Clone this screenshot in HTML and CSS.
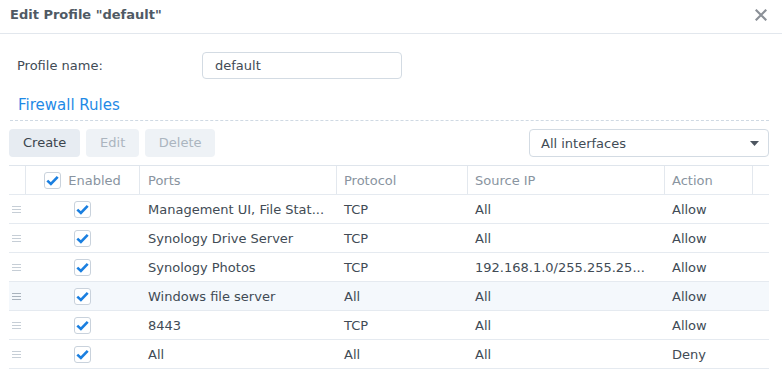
FILE: index.html
```html
<!DOCTYPE html>
<html>
<head>
<meta charset="utf-8">
<link rel="stylesheet" href="styles.css">
</head>
<body>
<div class="dialog">
  <div class="header">
    <div class="title">Edit Profile "default"</div>
    <svg class="close" width="12" height="12" viewBox="0 0 12 12"><path d="M1.5 1.5L10.5 10.5M10.5 1.5L1.5 10.5" stroke="#8b9097" stroke-width="2.2" stroke-linecap="square"/></svg>
  </div>
  <div class="content">
    <div class="form-row">
      <label class="label">Profile name:</label>
      <div class="input">default</div>
    </div>
    <div class="section">Firewall Rules</div>
    <div class="toolbar">
      <div class="btn">Create</div>
      <div class="btn disabled">Edit</div>
      <div class="btn disabled">Delete</div>
      <div class="spacer"></div>
      <div class="select"><span>All interfaces</span><svg width="9" height="5" viewBox="0 0 9 5"><path d="M0 0H9L4.5 5Z" fill="#4d5660"/></svg></div>
    </div>
    <div class="table">
      <div class="row head">
        <div class="c c-drag"></div>
        <div class="c c-en"><span class="cb"><svg width="13" height="11" viewBox="0 0 13 11"><path d="M1.3 5.6L4.9 9L11.7 1.8" fill="none" stroke="#1a7fe0" stroke-width="2.6"/></svg></span><span>Enabled</span></div>
        <div class="c c-ports">Ports</div>
        <div class="c c-proto">Protocol</div>
        <div class="c c-src">Source IP</div>
        <div class="c c-act">Action</div>
        <div class="c c-end"></div>
      </div>
      <div class="row">
        <div class="c c-drag"><span class="grip"></span></div>
        <div class="c c-en"><span class="cb"><svg width="13" height="11" viewBox="0 0 13 11"><path d="M1.3 5.6L4.9 9L11.7 1.8" fill="none" stroke="#1a7fe0" stroke-width="2.6"/></svg></span></div>
        <div class="c c-ports">Management UI, File Stat...</div>
        <div class="c c-proto">TCP</div>
        <div class="c c-src">All</div>
        <div class="c c-act">Allow</div>
        <div class="c c-end"></div>
      </div>
      <div class="row">
        <div class="c c-drag"><span class="grip"></span></div>
        <div class="c c-en"><span class="cb"><svg width="13" height="11" viewBox="0 0 13 11"><path d="M1.3 5.6L4.9 9L11.7 1.8" fill="none" stroke="#1a7fe0" stroke-width="2.6"/></svg></span></div>
        <div class="c c-ports">Synology Drive Server</div>
        <div class="c c-proto">TCP</div>
        <div class="c c-src">All</div>
        <div class="c c-act">Allow</div>
        <div class="c c-end"></div>
      </div>
      <div class="row">
        <div class="c c-drag"><span class="grip"></span></div>
        <div class="c c-en"><span class="cb"><svg width="13" height="11" viewBox="0 0 13 11"><path d="M1.3 5.6L4.9 9L11.7 1.8" fill="none" stroke="#1a7fe0" stroke-width="2.6"/></svg></span></div>
        <div class="c c-ports">Synology Photos</div>
        <div class="c c-proto">TCP</div>
        <div class="c c-src">192.168.1.0/255.255.25...</div>
        <div class="c c-act">Allow</div>
        <div class="c c-end"></div>
      </div>
      <div class="row hover">
        <div class="c c-drag"><span class="grip dark"></span></div>
        <div class="c c-en"><span class="cb"><svg width="13" height="11" viewBox="0 0 13 11"><path d="M1.3 5.6L4.9 9L11.7 1.8" fill="none" stroke="#1a7fe0" stroke-width="2.6"/></svg></span></div>
        <div class="c c-ports">Windows file server</div>
        <div class="c c-proto">All</div>
        <div class="c c-src">All</div>
        <div class="c c-act">Allow</div>
        <div class="c c-end"></div>
      </div>
      <div class="row">
        <div class="c c-drag"><span class="grip"></span></div>
        <div class="c c-en"><span class="cb"><svg width="13" height="11" viewBox="0 0 13 11"><path d="M1.3 5.6L4.9 9L11.7 1.8" fill="none" stroke="#1a7fe0" stroke-width="2.6"/></svg></span></div>
        <div class="c c-ports">8443</div>
        <div class="c c-proto">TCP</div>
        <div class="c c-src">All</div>
        <div class="c c-act">Allow</div>
        <div class="c c-end"></div>
      </div>
      <div class="row">
        <div class="c c-drag"><span class="grip"></span></div>
        <div class="c c-en"><span class="cb"><svg width="13" height="11" viewBox="0 0 13 11"><path d="M1.3 5.6L4.9 9L11.7 1.8" fill="none" stroke="#1a7fe0" stroke-width="2.6"/></svg></span></div>
        <div class="c c-ports">All</div>
        <div class="c c-proto">All</div>
        <div class="c c-src">All</div>
        <div class="c c-act">Deny</div>
        <div class="c c-end"></div>
      </div>
    </div>
  </div>
</div>
</body>
</html>
```
FILE: styles.css
```css
html, body {
  margin: 0;
  padding: 0;
  background: #fff;
}
body {
  font-family: "DejaVu Sans", Verdana, sans-serif;
  font-size: 13px;
  color: #414b55;
}
.dialog {
  width: 782px;
  height: 374px;
  overflow: hidden;
}
.header {
  height: 33px;
  border-bottom: 1px solid #e2e7ed;
  display: flex;
  align-items: center;
  justify-content: space-between;
  padding: 0 15px 0 10px;
}
.title {
  font-weight: bold;
  font-size: 13px;
  color: #505a64;
  margin-top: -4px;
}
.close {
  margin-top: -4px;
}
.content {
  padding: 0 13px 0 9px;
}
.form-row {
  display: flex;
  align-items: center;
  margin-top: 18px;
  height: 26px;
}
.label {
  width: 185px;
  padding-left: 8px;
}
.input {
  box-sizing: border-box;
  width: 200px;
  height: 27px;
  border: 1px solid #d3dbe3;
  border-radius: 4px;
  padding: 0 12px;
  line-height: 25px;
}
.section {
  margin-top: 17px;
  padding: 0 0 5px 8px;
  margin-left: 1px;
  line-height: 20px;
  font-size: 15px;
  color: #1f8ae6;
  border-bottom: 1px dashed #cfd9e3;
}
.toolbar {
  display: flex;
  align-items: center;
  margin-top: 8px;
  height: 28px;
  gap: 6px;
}
.btn {
  height: 28px;
  line-height: 28px;
  padding: 0 14px;
  border-radius: 4px;
  background: #e7ecf2;
  color: #3b444d;
  box-sizing: border-box;
}
.btn.disabled {
  background: #eef2f6;
  color: #abb5bf;
}
.btn:nth-child(2) { width: 53px; text-align: center; padding: 0; }
.btn:nth-child(3) { width: 70px; text-align: center; padding: 0; }
.spacer { flex: 1; }
.select {
  box-sizing: border-box;
  width: 240px;
  height: 28px;
  border: 1px solid #d3dbe3;
  border-radius: 4px;
  display: flex;
  align-items: center;
  justify-content: space-between;
  padding: 0 9px 0 11px;
}
.table {
  margin-top: 8px;
  border-top: 1px solid #dfe5ec;
}
.row {
  display: flex;
  height: 28px;
  border-bottom: 1px solid #e5eaf0;
  align-items: stretch;
}
.row.hover {
  background: #f4f8fc;
}
.c {
  box-sizing: border-box;
  display: flex;
  align-items: center;
  padding-left: 8px;
  white-space: nowrap;
  overflow: hidden;
}
.head .c {
  color: #8994a0;
}
.head .c + .c {
  border-left: 1px solid #e3e8ee;
  padding-left: 7px;
}
.c-drag { width: 16px; padding-left: 3px; }
.c-en { width: 114px; justify-content: center; padding-left: 0; gap: 7px; }
.c-ports { width: 197px; padding-left: 9px; }
.c-proto { width: 131px; }
.c-src { width: 197px; }
.c-act { width: 88px; }
.c-end { width: 17px; }
.head .c.c-ports { padding-left: 8px; }
.head .c.c-en { padding-left: 0; }
.cb {
  box-sizing: border-box;
  width: 17px;
  height: 17px;
  border: 1px solid #c9d2dc;
  border-radius: 3px;
  background: #fff;
  display: flex;
  align-items: center;
  justify-content: center;
}
.grip {
  display: block;
  width: 9px;
  height: 7px;
  border-top: 1px solid #c6ced6;
  border-bottom: 1px solid #c6ced6;
  position: relative;
  box-sizing: border-box;
}
.grip::after {
  content: "";
  position: absolute;
  left: 0;
  right: 0;
  top: 2px;
  border-top: 1px solid #c6ced6;
}
.grip.dark, .grip.dark::after { border-color: #a9b3bd; }
```
